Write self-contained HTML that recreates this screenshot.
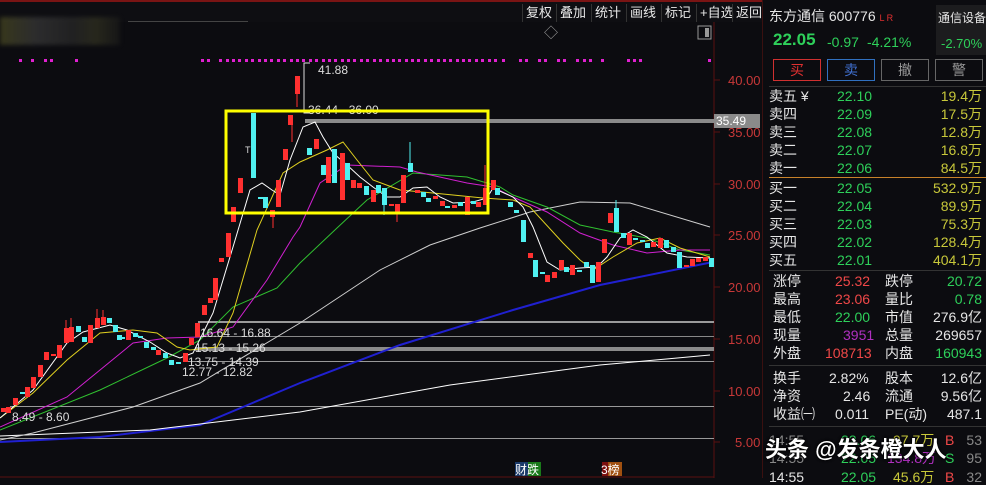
<!DOCTYPE html>
<html><head><meta charset="utf-8"><style>
*{margin:0;padding:0;box-sizing:border-box}
body{width:986px;height:478px;background:#0c0c10;overflow:hidden;position:relative;font-family:"Liberation Sans","Noto Sans CJK SC",sans-serif;color:#ddd}
.top{position:absolute;left:0;top:0;width:986px;height:22px;border-top:2px solid #7a1414;background:#0e0e12}
.tb{position:absolute;top:2px;font-size:13px;color:#e8e8e8;height:18px;line-height:18px;border-left:1px solid #333;padding-left:3px}
.rp{position:absolute;left:762px;top:0;width:224px;height:478px;background:#0c0c10;border-left:1px solid #3a1010}
.t{position:absolute;font-size:14px;white-space:nowrap;line-height:16px}
.g{color:#2ed05a}.y{color:#c8c83a}.w{color:#e6e6e6}.rd{color:#f04848}.m{color:#b030c0}
.btn{position:absolute;top:59px;width:48px;height:22px;border:1px solid #666;text-align:center;font-size:14px;line-height:20px;color:#999}
.hl{position:absolute;left:6px;width:218px;height:1px;background:#333}
</style></head><body>
<div class="top">
<div class="tb" style="left:522px">复权</div><div class="tb" style="left:556px">叠加</div><div class="tb" style="left:591px">统计</div><div class="tb" style="left:626px">画线</div><div class="tb" style="left:661px">标记</div><div class="tb" style="left:696px">+自选</div><div class="tb" style="left:732px">返回</div>
</div>
<div style="position:absolute;left:0;top:17px;width:120px;height:28px;background:linear-gradient(90deg,#4a4a22,#3a3a3a 30%,#2a2a2a 60%,#333322 80%,#1a1a1a);opacity:.7;filter:blur(2px)"></div>
<div style="position:absolute;left:128px;top:21px;width:120px;height:1px;background:#444"></div>
<svg width="760" height="478" style="position:absolute;left:0;top:0">
<line x1="714" y1="22" x2="714" y2="478" stroke="#5a1010"/>
<text x="544" y="38" fill="#999" font-size="14">◇</text><rect x="698" y="26" width="13" height="13" fill="none" stroke="#999"/><rect x="705" y="28" width="4" height="9" fill="#999"/>
<g fill="#e020d0">
<rect x="19" y="59" width="3" height="3"/><rect x="31" y="59" width="3" height="3"/><rect x="44" y="59" width="3" height="3"/><rect x="50" y="59" width="3" height="3"/><rect x="75" y="59" width="3" height="3"/>
<rect x="201" y="59" width="3" height="3"/><rect x="207" y="59" width="3" height="3"/><rect x="219" y="59" width="3" height="3"/><rect x="226" y="59" width="3" height="3"/><rect x="232" y="59" width="3" height="3"/><rect x="238" y="59" width="3" height="3"/><rect x="245" y="59" width="3" height="3"/><rect x="251" y="59" width="3" height="3"/><rect x="258" y="59" width="3" height="3"/><rect x="264" y="59" width="3" height="3"/><rect x="270" y="59" width="3" height="3"/><rect x="277" y="59" width="3" height="3"/><rect x="283" y="59" width="3" height="3"/><rect x="290" y="59" width="3" height="3"/><rect x="296" y="59" width="3" height="3"/><rect x="302" y="59" width="3" height="3"/><rect x="309" y="59" width="3" height="3"/><rect x="315" y="59" width="3" height="3"/><rect x="322" y="59" width="3" height="3"/><rect x="328" y="59" width="3" height="3"/><rect x="334" y="59" width="3" height="3"/><rect x="341" y="59" width="3" height="3"/><rect x="347" y="59" width="3" height="3"/><rect x="353" y="59" width="3" height="3"/><rect x="360" y="59" width="3" height="3"/><rect x="366" y="59" width="3" height="3"/><rect x="373" y="59" width="3" height="3"/><rect x="379" y="59" width="3" height="3"/><rect x="386" y="59" width="3" height="3"/><rect x="392" y="59" width="3" height="3"/><rect x="398" y="59" width="3" height="3"/><rect x="405" y="59" width="3" height="3"/><rect x="411" y="59" width="3" height="3"/><rect x="417" y="59" width="3" height="3"/><rect x="424" y="59" width="3" height="3"/><rect x="430" y="59" width="3" height="3"/><rect x="437" y="59" width="3" height="3"/><rect x="443" y="59" width="3" height="3"/><rect x="449" y="59" width="3" height="3"/><rect x="456" y="59" width="3" height="3"/><rect x="462" y="59" width="3" height="3"/><rect x="468" y="59" width="3" height="3"/><rect x="475" y="59" width="3" height="3"/><rect x="481" y="59" width="3" height="3"/><rect x="488" y="59" width="3" height="3"/><rect x="494" y="59" width="3" height="3"/>
<rect x="502" y="59" width="3" height="3"/><rect x="519" y="59" width="3" height="3"/><rect x="525" y="59" width="3" height="3"/><rect x="538" y="59" width="3" height="3"/><rect x="544" y="59" width="3" height="3"/><rect x="557" y="59" width="3" height="3"/><rect x="563" y="59" width="3" height="3"/><rect x="576" y="59" width="3" height="3"/><rect x="583" y="59" width="3" height="3"/><rect x="589" y="59" width="3" height="3"/><rect x="601" y="59" width="3" height="3"/><rect x="627" y="59" width="3" height="3"/><rect x="633" y="59" width="3" height="3"/><rect x="639" y="59" width="3" height="3"/><rect x="708" y="59" width="3" height="3"/>
</g>
<rect x="305" y="119" width="409" height="4" fill="#8a8a8a"/>
<rect x="198" y="321" width="516" height="2" fill="#9a9a9a"/>
<rect x="199" y="336" width="515" height="1" fill="#888"/>
<rect x="195" y="347" width="519" height="4" fill="#8a8a8a"/>
<rect x="185" y="361" width="529" height="1" fill="#999"/>
<rect x="10" y="406" width="704" height="1" fill="#999"/>
<rect x="0" y="438" width="714" height="1" fill="#999"/>
<g fill="none" stroke-width="1">
<polyline stroke="#2020d0" stroke-width="2" points="0,442 100,437 200,425 300,383 400,345 513,310 600,285 713,262"/>
<polyline stroke="#ffffff" points="0,436 150,430 300,412 450,385 600,365 710,355"/>
<polyline stroke="#cfcfcf" points="0,440 33,433 133,407 200,383 300,323 380,270 430,245 480,228 530,212 580,202 630,203 710,227"/>
<polyline stroke="#30c030" points="0,430 100,390 167,358 200,340 233,307 277,288 300,263 337,228 367,200 413,173 467,177 500,187 513,195 547,207 580,225 613,232 647,238 680,250 710,255"/>
<polyline stroke="#d020d0" points="0,427 67,397 133,343 167,338 200,337 233,327 267,280 293,237 300,227 320,183 347,165 400,167 417,172 467,183 493,187 513,197 547,212 580,233 613,245 647,253 680,250 710,250"/>
<polyline stroke="#e0d020" points="0,418 33,393 67,360 100,333 133,330 157,333 177,347 190,350 217,347 233,313 257,230 283,173 300,162 327,150 343,142 357,160 373,180 400,190 433,193 483,198 513,200 530,207 563,243 580,260 593,270 613,257 637,243 660,238 680,248 710,257"/>
<polyline stroke="#ffffff" points="0,418 33,390 67,343 83,332 110,325 127,330 150,342 167,353 180,358 193,353 213,313 233,247 250,190 262,183 272,190 280,195 290,160 303,127 315,122 323,137 333,153 347,165 360,177 373,187 387,197 400,197 413,188 427,187 440,197 453,203 473,202 487,198 493,188 513,197 523,207 533,227 547,262 560,270 580,268 597,267 607,257 620,238 633,230 647,237 667,253 687,257 710,258"/>
</g>
<g fill="#ff3030">
<rect x="1" y="408" width="5" height="4"/><rect x="6" y="407" width="5" height="6"/><rect x="13" y="398" width="5" height="7"/><rect x="25" y="387" width="5" height="10"/><rect x="31" y="377" width="5" height="11"/><rect x="38" y="365" width="5" height="12"/><rect x="44" y="352" width="5" height="8"/><rect x="51" y="354" width="5" height="2"/><rect x="57" y="345" width="5" height="13"/><rect x="64" y="328" width="5" height="15"/><rect x="69" y="327" width="5" height="15"/><rect x="88" y="325" width="5" height="18"/><rect x="95" y="318" width="5" height="10"/><rect x="101" y="317" width="5" height="8"/><rect x="126" y="330" width="5" height="10"/><rect x="156" y="350" width="5" height="5"/><rect x="183" y="353" width="5" height="9"/><rect x="189" y="338" width="5" height="7"/><rect x="195" y="323" width="5" height="14"/><rect x="202" y="305" width="5" height="10"/><rect x="208" y="298" width="5" height="5"/><rect x="213" y="278" width="5" height="22"/><rect x="219" y="258" width="5" height="4"/><rect x="226" y="233" width="5" height="24"/><rect x="231" y="207" width="5" height="15"/><rect x="238" y="178" width="5" height="15"/><rect x="270" y="210" width="5" height="7"/><rect x="276" y="180" width="5" height="27"/><rect x="283" y="149" width="5" height="11"/><rect x="288" y="115" width="5" height="10"/><rect x="295" y="76" width="5" height="18"/><rect x="314" y="139" width="5" height="10"/><rect x="326" y="157" width="5" height="26"/><rect x="340" y="153" width="5" height="47"/><rect x="351" y="180" width="5" height="8"/><rect x="357" y="183" width="5" height="5"/><rect x="371" y="190" width="5" height="12"/><rect x="389" y="204" width="5" height="2"/><rect x="395" y="204" width="5" height="9"/><rect x="401" y="175" width="5" height="28"/><rect x="415" y="190" width="5" height="3"/><rect x="433" y="196" width="5" height="3"/><rect x="440" y="201" width="5" height="5"/><rect x="452" y="205" width="5" height="3"/><rect x="465" y="197" width="5" height="18"/><rect x="476" y="202" width="5" height="5"/><rect x="483" y="188" width="5" height="17"/><rect x="491" y="180" width="5" height="10"/><rect x="528" y="253" width="5" height="5"/><rect x="545" y="275" width="5" height="7"/><rect x="552" y="272" width="5" height="6"/><rect x="559" y="260" width="5" height="10"/><rect x="570" y="265" width="5" height="10"/><rect x="596" y="262" width="5" height="20"/><rect x="602" y="239" width="5" height="14"/><rect x="608" y="213" width="5" height="10"/><rect x="627" y="233" width="5" height="12"/><rect x="651" y="242" width="5" height="5"/><rect x="658" y="238" width="5" height="10"/><rect x="684" y="265" width="5" height="2"/><rect x="690" y="259" width="5" height="7"/><rect x="696" y="258" width="5" height="4"/><rect x="703" y="257" width="5" height="4"/>
</g>
<g fill="#50f0f0">
<rect x="20" y="392" width="5" height="2"/><rect x="76" y="326" width="5" height="6"/><rect x="82" y="337" width="5" height="5"/><rect x="107" y="318" width="5" height="5"/><rect x="113" y="325" width="5" height="7"/><rect x="117" y="335" width="5" height="5"/><rect x="120" y="337" width="5" height="2"/><rect x="133" y="333" width="5" height="4"/><rect x="138" y="336" width="5" height="2"/><rect x="144" y="342" width="5" height="6"/><rect x="151" y="347" width="5" height="3"/><rect x="163" y="353" width="5" height="5"/><rect x="169" y="360" width="5" height="5"/><rect x="176" y="362" width="5" height="2"/><rect x="251" y="113" width="5" height="65"/><rect x="258" y="197" width="5" height="2"/><rect x="263" y="197" width="5" height="11"/><rect x="307" y="148" width="5" height="7"/><rect x="321" y="165" width="5" height="10"/><rect x="332" y="149" width="5" height="34"/><rect x="345" y="163" width="5" height="17"/><rect x="364" y="186" width="5" height="9"/><rect x="376" y="185" width="5" height="8"/><rect x="382" y="188" width="5" height="17"/><rect x="408" y="163" width="5" height="9"/><rect x="421" y="192" width="5" height="5"/><rect x="426" y="198" width="5" height="4"/><rect x="445" y="206" width="5" height="2"/><rect x="458" y="202" width="5" height="4"/><rect x="471" y="201" width="5" height="3"/><rect x="495" y="188" width="5" height="7"/><rect x="508" y="202" width="5" height="5"/><rect x="514" y="210" width="5" height="3"/><rect x="521" y="220" width="5" height="22"/><rect x="533" y="260" width="5" height="17"/><rect x="540" y="272" width="5" height="2"/><rect x="564" y="267" width="5" height="5"/><rect x="577" y="270" width="5" height="2"/><rect x="584" y="262" width="5" height="5"/><rect x="590" y="265" width="5" height="18"/><rect x="614" y="208" width="5" height="24"/><rect x="621" y="233" width="5" height="5"/><rect x="633" y="238" width="5" height="2"/><rect x="640" y="240" width="5" height="2"/><rect x="645" y="243" width="5" height="5"/><rect x="664" y="240" width="5" height="8"/><rect x="671" y="247" width="5" height="5"/><rect x="677" y="252" width="5" height="16"/><rect x="709" y="258" width="5" height="9"/>
</g>
<g stroke="#ff3030"><line x1="71" y1="318" x2="71" y2="327"/><line x1="66" y1="320" x2="66" y2="328"/><line x1="97" y1="309" x2="97" y2="318"/><line x1="103" y1="310" x2="103" y2="317"/><line x1="297" y1="94" x2="297" y2="107"/><line x1="292" y1="125" x2="292" y2="142"/><line x1="273" y1="217" x2="273" y2="228"/><line x1="397" y1="213" x2="397" y2="222"/><line x1="485" y1="165" x2="485" y2="188"/></g>
<g stroke="#50f0f0"><line x1="410" y1="142" x2="410" y2="163"/><line x1="616" y1="200" x2="616" y2="208"/><line x1="384" y1="205" x2="384" y2="215"/></g>
<polyline points="310,113 304,113 304,63 310,63" fill="none" stroke="#ddd"/>
<g fill="#dcdcdc" font-size="12" font-family="Liberation Sans">
<text x="318" y="74">41.88</text><text x="308" y="114">36.44 - 36.00</text>
<text x="200" y="337">16.64 - 16.88</text><text x="195" y="352">15.13 - 15.26</text><text x="188" y="366">13.75 - 14.39</text><text x="182" y="376">12.77 - 12.82</text><text x="12" y="421">8.49 - 8.60</text>
<text x="245" y="153" font-size="9">T</text>
</g>
<rect x="226" y="111" width="262" height="102" fill="none" stroke="#ffff00" stroke-width="3"/>
<rect x="714" y="114" width="46" height="14" fill="#8a8a8a"/><text x="716" y="125" fill="#fff" font-size="12">35.49</text>
<g stroke="#5a1010"><line x1="714" y1="80" x2="720" y2="80"/><line x1="714" y1="132" x2="720" y2="132"/><line x1="714" y1="184" x2="720" y2="184"/><line x1="714" y1="235" x2="720" y2="235"/><line x1="714" y1="287" x2="720" y2="287"/><line x1="714" y1="339" x2="720" y2="339"/><line x1="714" y1="391" x2="720" y2="391"/><line x1="714" y1="442" x2="720" y2="442"/></g>
<g fill="#c83838" font-size="13"><text x="728" y="85">40.00</text><text x="728" y="137">35.00</text><text x="728" y="189">30.00</text><text x="728" y="240">25.00</text><text x="728" y="292">20.00</text><text x="728" y="344">15.00</text><text x="728" y="396">10.00</text><text x="735" y="447">5.00</text></g>
<line x1="0" y1="477" x2="714" y2="477" stroke="#5a1010"/>
<rect x="515" y="462" width="13" height="14" fill="#1a3a6a"/><rect x="528" y="462" width="13" height="14" fill="#1a7a1a"/>
<text x="515" y="474" fill="#fff" font-size="12">财跌</text>
<rect x="602" y="462" width="6" height="14" fill="#7a1010"/><rect x="608" y="462" width="14" height="14" fill="#a05010"/>
<text x="601" y="474" fill="#fff" font-size="12">3榜</text>
</svg>
<div class="rp">
<div class="t w" style="left:6px;top:8px;font-size:14px">东方通信 600776 <span style="color:#e03030;font-size:9px">L R</span></div>
<div style="position:absolute;left:173px;top:5px;width:51px;height:50px;background:#1c1c1e"></div>
<div class="t w" style="left:175px;top:10px;font-size:12px">通信设备</div>
<div class="t g" style="left:178px;top:36px;font-size:13px">-2.70%</div>
<div class="t g" style="left:10px;top:32px;font-size:17px;font-weight:bold">22.05</div>
<div class="t g" style="left:64px;top:34px">-0.97</div>
<div class="t g" style="left:104px;top:34px">-4.21%</div>
<div class="btn" style="left:10px;border-color:#d03030;color:#e03030">买</div>
<div class="btn" style="left:64px;border-color:#3070c0;color:#4070d0">卖</div>
<div class="btn" style="left:118px">撤</div>
<div class="btn" style="left:172px">警</div>
<div class="hl" style="top:86px"></div>
<div class="t w" style="left:6px;top:88px">卖五 ¥</div><div class="t g" style="left:74px;top:88px">22.10</div><div class="t y" style="right:4px;top:88px">19.4万</div>
<div class="t w" style="left:6px;top:106px">卖四</div><div class="t g" style="left:74px;top:106px">22.09</div><div class="t y" style="right:4px;top:106px">17.5万</div>
<div class="t w" style="left:6px;top:124px">卖三</div><div class="t g" style="left:74px;top:124px">22.08</div><div class="t y" style="right:4px;top:124px">12.8万</div>
<div class="t w" style="left:6px;top:142px">卖二</div><div class="t g" style="left:74px;top:142px">22.07</div><div class="t y" style="right:4px;top:142px">16.8万</div>
<div class="t w" style="left:6px;top:160px">卖一</div><div class="t g" style="left:74px;top:160px">22.06</div><div class="t y" style="right:4px;top:160px">84.5万</div>
<div class="hl" style="top:177px;background:#c8822a"></div>
<div class="t w" style="left:6px;top:180px">买一</div><div class="t g" style="left:74px;top:180px">22.05</div><div class="t y" style="right:4px;top:180px">532.9万</div>
<div class="t w" style="left:6px;top:198px">买二</div><div class="t g" style="left:74px;top:198px">22.04</div><div class="t y" style="right:4px;top:198px">89.9万</div>
<div class="t w" style="left:6px;top:216px">买三</div><div class="t g" style="left:74px;top:216px">22.03</div><div class="t y" style="right:4px;top:216px">75.3万</div>
<div class="t w" style="left:6px;top:234px">买四</div><div class="t g" style="left:74px;top:234px">22.02</div><div class="t y" style="right:4px;top:234px">128.4万</div>
<div class="t w" style="left:6px;top:252px">买五</div><div class="t g" style="left:74px;top:252px">22.01</div><div class="t y" style="right:4px;top:252px">404.1万</div>
<div class="hl" style="top:270px"></div>
<div class="t w" style="left:10px;top:273px">涨停</div><div class="t rd" style="left:72px;top:273px">25.32</div><div class="t w" style="left:122px;top:273px">跌停</div><div class="t g" style="right:4px;top:273px">20.72</div>
<div class="t w" style="left:10px;top:291px">最高</div><div class="t rd" style="left:72px;top:291px">23.06</div><div class="t w" style="left:122px;top:291px">量比</div><div class="t g" style="right:4px;top:291px">0.78</div>
<div class="t w" style="left:10px;top:309px">最低</div><div class="t g" style="left:72px;top:309px">22.00</div><div class="t w" style="left:122px;top:309px">市值</div><div class="t w" style="right:4px;top:309px">276.9亿</div>
<div class="t w" style="left:10px;top:327px">现量</div><div class="t m" style="left:80px;top:327px">3951</div><div class="t w" style="left:122px;top:327px">总量</div><div class="t w" style="right:4px;top:327px">269657</div>
<div class="t w" style="left:10px;top:345px">外盘</div><div class="t rd" style="left:62px;top:345px">108713</div><div class="t w" style="left:122px;top:345px">内盘</div><div class="t g" style="right:4px;top:345px">160943</div>
<div class="hl" style="top:365px"></div>
<div class="t w" style="left:10px;top:370px">换手</div><div class="t w" style="left:66px;top:370px">2.82%</div><div class="t w" style="left:122px;top:370px">股本</div><div class="t w" style="right:4px;top:370px">12.6亿</div>
<div class="t w" style="left:10px;top:388px">净资</div><div class="t w" style="left:80px;top:388px">2.46</div><div class="t w" style="left:122px;top:388px">流通</div><div class="t w" style="right:4px;top:388px">9.56亿</div>
<div class="t w" style="left:10px;top:406px">收益㈠</div><div class="t w" style="left:72px;top:406px">0.011</div><div class="t w" style="left:122px;top:406px">PE(动)</div><div class="t w" style="right:4px;top:406px">487.1</div>
<div class="hl" style="top:426px"></div>
<div class="t w" style="left:6px;top:432px;color:#888">14:55</div><div class="t g" style="left:78px;top:432px">22.06</div><div class="t y" style="left:130px;top:432px">97.7万</div><div class="t rd" style="left:182px;top:432px">B</div><div class="t" style="right:4px;top:432px;color:#888">53</div>
<div class="t w" style="left:6px;top:450px;color:#888">14:55</div><div class="t g" style="left:78px;top:450px">22.05</div><div class="t m" style="left:124px;top:450px">134.8万</div><div class="t g" style="left:182px;top:450px">S</div><div class="t" style="right:4px;top:450px;color:#888">95</div>
<div class="t w" style="left:6px;top:469px">14:55</div><div class="t g" style="left:78px;top:469px">22.05</div><div class="t y" style="left:130px;top:469px">45.6万</div><div class="t rd" style="left:182px;top:469px">B</div><div class="t" style="right:4px;top:469px;color:#888">32</div>
<div class="t" style="left:2px;top:437px;font-size:22px;line-height:26px;color:#fff;font-weight:bold;text-shadow:0 0 3px #000,0 0 2px #000">头条 @发条橙大人</div>
</div>
</body></html>
